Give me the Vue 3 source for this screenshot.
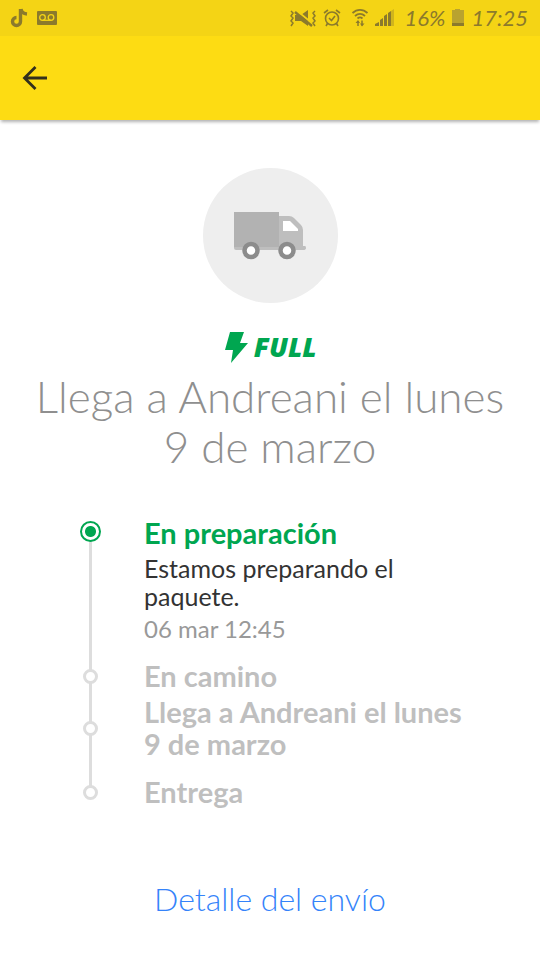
<script setup>
const steps = [
  {
    title: 'En preparación',
    detail: 'Estamos preparando el paquete.',
    date: '06 mar 12:45',
    active: true,
  },
  { title: 'En camino' },
  { title: 'Llega a Andreani el lunes 9 de marzo' },
  { title: 'Entrega' },
]
</script>

<template>
  <div class="screen">
    <div class="status">
      <div class="group">
        <svg width="18" height="20" viewBox="0 0 18 20" aria-hidden="true">
          <path d="M10.500 1v12.500a4 4 0 1 1-4-4M11 1c.5 3.500 2.500 4.700 6 5" fill="none" stroke="currentColor" stroke-width="3.400" />
        </svg>
        <svg width="20" height="14" viewBox="0 0 20 14" aria-hidden="true">
          <rect width="20" height="14" rx="1" fill="currentColor" />
          <g fill="none" stroke="#f4d415" stroke-width="1.300">
            <circle cx="5.500" cy="6.500" r="2.800" />
            <circle cx="14" cy="6.500" r="2.800" />
            <path d="M5.500 9.300H14" />
          </g>
        </svg>
      </div>
      <div class="group">
        <svg width="28" height="20" viewBox="0 0 28 20" aria-hidden="true">
          <path d="M6 7h6l7-5v16l-7-5H6z" fill="currentColor" />
          <path d="M7 2l17 14" stroke="#f4d415" stroke-width="2" />
          <path d="M6 4l17 14" stroke="currentColor" stroke-width="2.400" />
          <path d="M2 3l2 2-2 3 2 2-2 3 2 2-2 3M26 3l-2 2 2 3-2 2 2 3-2 2 2 3" fill="none" stroke="currentColor" stroke-width="1.500" />
        </svg>
        <svg class="clock" width="18" height="20" viewBox="0 0 18 20" fill="none" stroke="currentColor" stroke-width="1.600" aria-hidden="true">
          <circle cx="9" cy="10.500" r="6.500" />
          <path d="M6 10l2.500 2.500L12 8M1 5l4-3M17 5l-4-3M4.500 15.500L3 18M13.500 15.500L15 18" />
        </svg>
        <svg class="wifi" width="18" height="20" viewBox="0 0 18 20" fill="none" stroke="currentColor" aria-hidden="true">
          <path d="M1.500 5C6 .8 12 .8 16.500 5M4 8c3-2.700 7-2.700 10 0M6.500 10.500c1.500-1.300 3.500-1.300 5 0" stroke-width="1.800" />
          <path d="M7 18v-5M11 12.500v5" stroke-width="1.500" />
          <path d="M4.500 15L7 12l2 3zM9 15.500h4.500L11 18.500z" fill="currentColor" stroke="none" />
        </svg>
        <svg width="20" height="20" viewBox="0 0 20 20" fill="currentColor" aria-hidden="true">
          <path d="M0 18v-2l4-2v4zM5 18v-6l3-2v8zM9 18V8l3-2v12zM13 18V5l3-2v15z" />
          <path d="M16 18V3l3-2v17z" opacity=".35" />
        </svg>
        <span class="percent">16%</span>
        <svg width="14" height="20" viewBox="0 0 14 20" aria-hidden="true">
          <path d="M1 2h3V1h5v1h4v14H1z" fill="#b9a32f" />
          <path d="M1 15h12v3H1z" fill="currentColor" />
        </svg>
        <time class="time">17:25</time>
      </div>
    </div>

    <header class="bar">
      <button class="back" type="button" aria-label="Volver">
        <svg width="26" height="26" viewBox="0 0 26 26" fill="none" stroke="#33301c" stroke-width="2.800" aria-hidden="true">
          <path d="M25 13H3M13.500 2L2.500 13l11 11" />
        </svg>
      </button>
    </header>

    <main class="main">
      <div class="badge">
        <svg width="74" height="50" viewBox="0 0 74 50" aria-hidden="true">
          <path d="M1 35h71q1 0 1 2t-3 2H3q-2 0-2-2z" fill="#bebebe" />
          <path d="M1 1h45v35H1z" fill="#b2b2b2" />
          <path d="M46 5h10q3 0 5 2l7 7q2 2 2 5v17H46z" fill="#bebebe" />
          <path d="M50 10h7l8 8v2H50z" fill="#fff" />
          <g fill="#fff" stroke="#8c8c8c" stroke-width="4.500">
            <circle cx="18" cy="39.500" r="6.500" />
            <circle cx="54" cy="39.500" r="6.500" />
          </g>
        </svg>
      </div>

      <p class="full">
        <svg width="24" height="32" viewBox="0 0 24 32" aria-hidden="true">
          <path d="M6 1h14l-4 11h8L7 32l2-13H1z" fill="#00a650" />
        </svg>
        FULL
      </p>

      <h1 class="heading">Llega a Andreani el lunes 9 de marzo</h1>

      <ol class="steps">
        <li v-for="step in steps" :key="step.title" class="step" :class="{ active: step.active }">
          <span class="marker"><span class="dot"></span></span>
          <div class="content">
            <h2 class="title">{{ step.title }}</h2>
            <p v-if="step.detail" class="detail">{{ step.detail }}</p>
            <p v-if="step.date" class="date">{{ step.date }}</p>
          </div>
        </li>
      </ol>

      <a class="link" href="#detalle">Detalle del envío</a>
    </main>
  </div>
</template>

<style>
body {
  margin: 0;
  background: #fff;
}
</style>

<style scoped>
.screen {
  min-height: 100vh;
  background: #fff;
  font-family: "Lato", "Open Sans", sans-serif;
}
.screen svg {
  display: block;
  flex: none;
}
h1, h2, p, ol {
  margin: 0;
  padding: 0;
}
.status {
  display: flex;
  align-items: center;
  justify-content: space-between;
  height: 36px;
  padding: 0 12px 0 10px;
  background: #f4d415;
  color: #8b7a2c;
}
.group {
  display: flex;
  align-items: center;
}
.group:first-child {
  gap: 9px;
}
.group:last-child {
  gap: 6px;
}
.wifi {
  margin-left: 4px;
}
.percent,
.time {
  font-size: 22px;
  line-height: 36px;
  font-style: italic;
}
.percent {
  margin-left: 4px;
}
.bar {
  display: flex;
  align-items: center;
  height: 84px;
  padding: 0 13px;
  background: #fddc13;
  box-shadow: 0 3px 3px -1px rgba(0, 0, 0, 0.3);
}
.back {
  display: flex;
  padding: 9px;
  border: 0;
  background: none;
  cursor: pointer;
}
.main {
  display: flex;
  flex-direction: column;
  align-items: center;
  padding: 48px 32px 32px;
}
.badge {
  display: flex;
  align-items: center;
  justify-content: center;
  width: 135px;
  height: 135px;
  border-radius: 50%;
  background: #eee;
}
.full {
  display: flex;
  align-items: center;
  gap: 6px;
  margin-top: 28px;
  color: #00a650;
  font-family: "Open Sans", "Inter", sans-serif;
  font-size: 27px;
  line-height: 32px;
  font-weight: 800;
  font-style: italic;
}
.heading {
  margin-top: 8px;
  color: #8f8f8f;
  font-size: 44px;
  line-height: 50px;
  font-weight: 300;
  text-align: center;
}
.steps {
  align-self: stretch;
  margin-top: 46px;
  padding: 0 30px 0 47px;
  list-style: none;
}
.step {
  position: relative;
  display: flex;
  align-items: center;
  gap: 42px;
}
.step::before {
  content: "";
  position: absolute;
  top: 0;
  bottom: 0;
  left: 10px;
  width: 3px;
  background: #ddd;
}
.step:first-child {
  align-items: flex-start;
  padding-bottom: 17px;
}
.step:first-child::before {
  top: 14px;
}
.step:nth-child(3) {
  padding: 4px 0 16px;
}
.step:last-child::before {
  bottom: 16px;
}
.marker {
  position: relative;
  display: flex;
  flex: none;
  justify-content: center;
  width: 23px;
}
.dot {
  box-sizing: border-box;
  width: 15px;
  height: 15px;
  border: 3px solid #ddd;
  border-radius: 50%;
  background: #fff;
}
.active .marker {
  padding-top: 4px;
}
.active .dot {
  width: 21px;
  height: 21px;
  border: 2px solid #00a650;
  background: radial-gradient(circle, #00a650 5px, #fff 6px);
}
.title {
  color: #bfbfbf;
  font-size: 29px;
  line-height: 32px;
  font-weight: 700;
}
.active .title {
  color: #00a650;
}
.detail {
  margin-top: 5px;
  max-width: 290px;
  color: #333;
  font-size: 25px;
  line-height: 28px;
}
.date {
  margin-top: 5px;
  color: #999;
  font-size: 24px;
  line-height: 28px;
}
.link {
  margin-top: 71px;
  color: #3483fa;
  font-size: 32px;
  line-height: 40px;
  font-weight: 300;
  text-decoration: none;
}
</style>
